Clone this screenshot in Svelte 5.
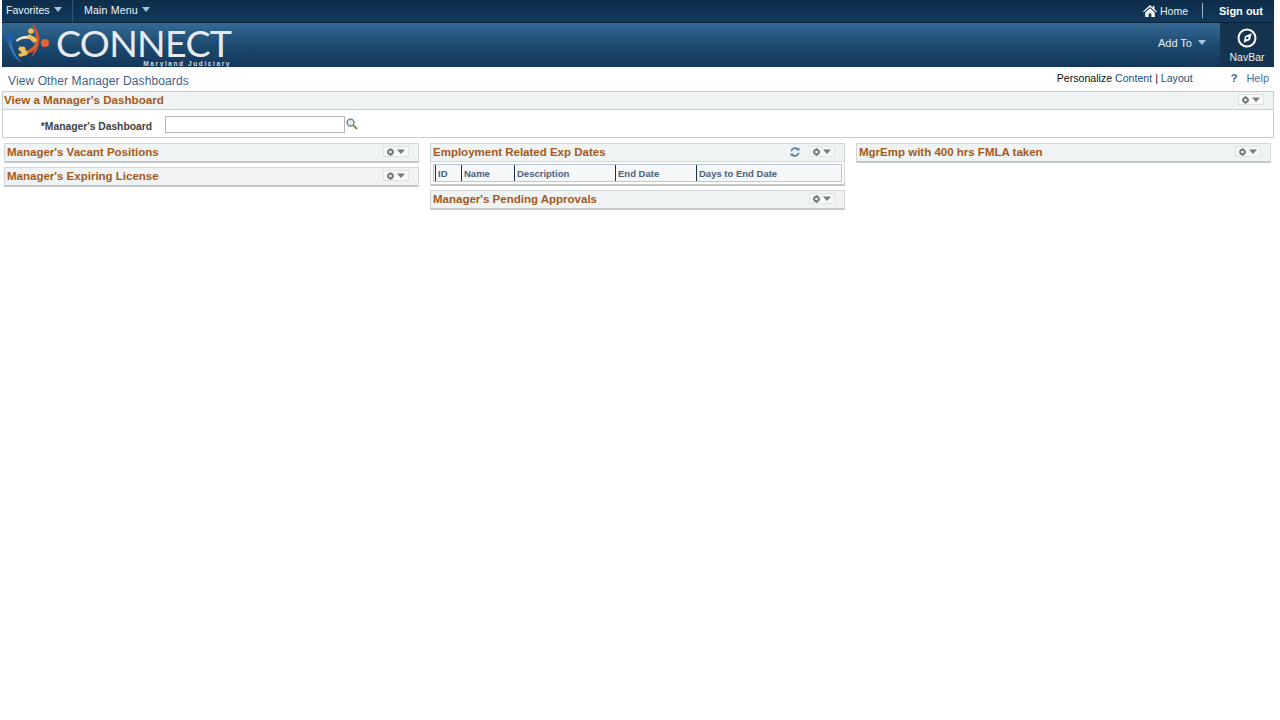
<script>
  const columns = [
    [
      { title: "Manager's Vacant Positions" },
      { title: "Manager's Expiring License" }
    ],
    [
      { title: 'Employment Related Exp Dates', refresh: true, headers: [
        { label: 'ID', w: 26 },
        { label: 'Name', w: 53 },
        { label: 'Description', w: 101 },
        { label: 'End Date', w: 81 },
        { label: 'Days to End Date', w: 144 }
      ] },
      { title: "Manager's Pending Approvals" }
    ],
    [
      { title: 'MgrEmp with 400 hrs FMLA taken' }
    ]
  ];
</script>

{#snippet gear()}
  <button class="gear" aria-label="Options">
    <svg width="18" height="8" viewBox="0 0 18 8">
      <circle cx="3.5" cy="4" r="2.3" fill="none" stroke="#767b7f" stroke-width="1.9" />
      <path d="M3.5 0v1M3.5 7v1M0 4h1M6 4h1" stroke="#767b7f" stroke-width="1.3" />
      <path d="M10 1.5h8l-4 4.5z" fill="#767b7f" />
    </svg>
  </button>
{/snippet}

<div class="page">
  <header>
    <div class="topbar">
      <div class="menus">
        <span class="menu fav">Favorites <i class="caret"></i></span>
        <span class="menu main">Main Menu <i class="caret"></i></span>
      </div>
      <div class="links">
        <svg class="home" width="14" height="12" viewBox="0 0 14 12">
          <path d="M7 0 0 6.4l.7.8L7 1.9l6.3 5.3.7-.8-2.6-2.3V1H9.8v1.8zM2.2 7.4V12h3.4V8.6h2.8V12h3.4V7.4L7 3.2z" fill="#fff" />
        </svg>
        <span class="home-label">Home</span>
        <span class="sep"></span>
        <b>Sign out</b>
      </div>
    </div>
    <div class="brand">
      <div class="logo">
        <svg width="50" height="44" viewBox="0 0 50 44">
          <path d="M30 0c9 9 11 23-1 35 5-10 7-22 1-35z" fill="#d4502f" />
          <path d="M9 16c1 10 5 18 12 24-9-4-14-13-15-23z" fill="#2f78b8" />
          <circle cx="8" cy="15" r="4.6" fill="#1f5ca6" />
          <circle cx="43" cy="20" r="4" fill="#e4652f" />
          <circle cx="29" cy="8" r="2.8" fill="#f0bf5a" />
          <path d="M14 17c3-3 8-5 14-4l-1 3c-5-1-9 0-12 3z" fill="#e9e6d6" />
          <path d="M27 11l7 4 1 3-3 2-7-6z" fill="#f0bf5a" />
          <path d="M36 18c0 6-4 11-11 13l-1-3c5-2 9-5 10-10z" fill="#df5f2c" />
          <path d="M18 23l8 6-1 3-7 2-2-3 4-1-4-4z" fill="#f0bf5a" />
          <circle cx="21" cy="26" r="2.6" fill="#f0bf5a" />
        </svg>
        <div class="wordmark">
          <span class="connect">CONNECT</span>
          <span class="md">Maryland Judiciary</span>
        </div>
      </div>
      <div class="brand-right">
        <span class="addto">Add To <i class="caret"></i></span>
        <div class="navbar">
          <svg width="20" height="20" viewBox="0 0 20 20">
            <circle cx="10" cy="10" r="8.5" fill="none" stroke="#fff" stroke-width="2" />
            <path d="M14.8 5.2 13 12 6.6 14.8 8 8z" fill="#fff" />
            <circle cx="10.2" cy="10" r="1.3" fill="#1d3f5e" />
          </svg>
          <span>NavBar</span>
        </div>
      </div>
    </div>
  </header>

  <div class="toolbar">
    <a class="other" href="#other">View Other Manager Dashboards</a>
    <div class="personalize">
      <span>Personalize <em>Content</em> | <em>Layout</em></span>
      <span class="help"><b>?</b><em>Help</em></span>
    </div>
  </div>

  <section class="search">
    <div class="search-head">
      <h2>View a Manager's Dashboard</h2>
      {@render gear()}
    </div>
    <div class="search-body">
      <label for="mgr">*Manager's Dashboard</label>
      <input id="mgr" type="text" />
      <svg class="lens" width="12" height="12" viewBox="0 0 12 12">
        <circle cx="4.6" cy="4.6" r="3.5" fill="#dfeaf0" stroke="#5c7f86" stroke-width="1.3" />
        <path d="M7.4 7.4 11 11" stroke="#8a8a3a" stroke-width="2" />
      </svg>
    </div>
  </section>

  <div class="columns">
    {#each columns as col}
      <div class="col">
        {#each col as p}
          <section class="pagelet">
            <div class="pagelet-head">
              <h3>{p.title}</h3>
              {#if p.refresh}
                <svg class="refresh" width="10" height="10" viewBox="0 0 10 10">
                  <path d="M1.2 4.2A4 4 0 0 1 8 2.4M8.8 5.8A4 4 0 0 1 2 7.6" fill="none" stroke="#4f7a9c" stroke-width="1.6" />
                  <path d="M9.4.6v3H6.4zM.6 9.4v-3h3z" fill="#4f7a9c" />
                </svg>
              {/if}
              {@render gear()}
            </div>
            {#if p.headers}
              <div class="grid-wrap">
                <div class="grid">
                  {#each p.headers as h}
                    <span style="width: {h.w}px">{h.label}</span>
                  {/each}
                </div>
              </div>
            {/if}
          </section>
        {/each}
      </div>
    {/each}
  </div>
</div>

<style>
  :global(body) {
    background: #fff;
    font-family: "Liberation Sans", Arial, sans-serif;
  }

  .page {
    width: 1272px;
    margin-left: 2px;
    min-height: 720px;
  }

  .topbar {
    height: 22px;
    display: flex;
    justify-content: space-between;
    background: linear-gradient(#0d2c49, #12395c);
    border-bottom: 1px solid #0a2238;
    color: #fff;
    font-size: 10.6px;
  }

  .menus {
    display: flex;
  }

  .menu {
    display: flex;
    align-items: center;
    gap: 3px;
    height: 22px;
    padding-bottom: 3px;
    box-sizing: border-box;
    color: #eef3f7;
  }

  .fav {
    width: 71px;
    padding-left: 4px;
    border-right: 1px solid #2f5575;
  }

  .main {
    padding-left: 11px;
    letter-spacing: 0.15px;
  }

  .caret {
    display: inline-block;
    width: 0;
    height: 0;
    margin-left: 1px;
    border-left: 4px solid transparent;
    border-right: 4px solid transparent;
    border-top: 5px solid #a9c3d8;
  }

  .links {
    display: flex;
    align-items: center;
    padding: 0 11px 1px 0;
  }

  .home {
    margin-right: 3px;
  }

  .home-label {
    color: #eef3f7;
    font-size: 10.5px;
  }

  .sep {
    width: 1px;
    height: 15px;
    margin: 0 16px 0 14px;
    background: #9fb4c6;
  }

  .links b {
    font-size: 11px;
  }

  .brand {
    height: 44px;
    display: flex;
    justify-content: space-between;
    background: linear-gradient(#346a95, #1d4a70 50%, #12375a);
  }

  .logo {
    display: flex;
  }

  .wordmark {
    position: relative;
    margin-left: 4px;
    width: 180px;
  }

  .connect {
    display: block;
    margin-top: 3px;
    font-family: Lato, sans-serif;
    font-weight: 400;
    font-size: 37.5px;
    line-height: 33px;
    color: #e8ebed;
    letter-spacing: -0.7px;
  }

  .md {
    position: absolute;
    top: 37px;
    right: 5px;
    font-size: 6.5px;
    line-height: 7px;
    font-weight: bold;
    letter-spacing: 1.6px;
    color: #d5dce2;
  }

  .brand-right {
    display: flex;
    align-items: stretch;
  }

  .addto {
    display: flex;
    align-items: center;
    gap: 4px;
    padding: 0 14px 5px 0;
    font-size: 11px;
    color: #e6edf3;
  }

  .addto .caret {
    margin-left: 2px;
  }

  .navbar {
    width: 54px;
    background: #14344f;
    display: flex;
    flex-direction: column;
    align-items: center;
    padding-top: 5px;
    box-sizing: border-box;
    color: #e6edf3;
    font-size: 10.5px;
    gap: 3px;
  }

  .toolbar {
    height: 24px;
    display: flex;
    justify-content: space-between;
    align-items: flex-start;
  }

  .other {
    margin: 7px 0 0 6px;
    font-size: 12px;
    line-height: 14px;
    letter-spacing: 0.1px;
    color: #3f5f8a;
    text-decoration: none;
  }

  .personalize {
    display: flex;
    margin-top: 5px;
    padding-right: 5px;
    font-size: 10.6px;
    line-height: 12px;
    color: #111;
  }

  .personalize em {
    font-style: normal;
    color: #1d4f78;
  }

  .help {
    margin-left: 38px;
    font-size: 11px;
  }

  .help b {
    color: #3d5f9c;
    margin-right: 9px;
  }

  .help em {
    color: #3f6f98;
  }

  .search {
    border: 1px solid #c9cdcf;
    border-top-color: #c4c8ca;
    height: 47px;
    box-sizing: border-box;
  }

  .search-head {
    height: 18px;
    box-sizing: border-box;
    display: flex;
    justify-content: space-between;
    align-items: center;
    background: #eff3f4;
    border-bottom: 1px solid #c9cdcf;
    padding: 0 9px 0 1px;
  }

  h2, h3 {
    margin: 0;
    font-size: 11.5px;
    font-weight: bold;
    color: #a35a20;
    padding-bottom: 2px;
  }

  h2 {
    font-size: 11.6px;
  }

  .search-body {
    display: flex;
    align-items: center;
    height: 27px;
  }

  label {
    width: 149px;
    box-sizing: border-box;
    text-align: right;
    font-size: 10.3px;
    font-weight: bold;
    color: #3c3f42;
    margin-top: 5px;
  }

  input {
    width: 180px;
    height: 17px;
    box-sizing: border-box;
    margin: 1px 0 0 13px;
    border: 1px solid #b4b8ba;
    padding: 0;
  }

  .lens {
    margin-left: 1px;
  }

  .columns {
    display: grid;
    grid-template-columns: repeat(3, 415px);
    column-gap: 11px;
    padding: 5px 0 0 2px;
  }

  .col {
    display: flex;
    flex-direction: column;
    gap: 4px;
  }

  .pagelet {
    border: 1px solid #d3d7d9;
    border-bottom: 2px solid #c3c8cb;
    background: #fff;
  }

  .pagelet-head {
    height: 17px;
    display: flex;
    align-items: center;
    background: #eff3f4;
    padding: 0 9px 0 2px;
  }

  .pagelet-head h3 {
    flex: 1;
  }

  .refresh {
    margin: 0 9px 1px 0;
  }

  .gear {
    width: 26px;
    height: 11px;
    margin-bottom: 2px;
    padding: 0;
    display: flex;
    align-items: center;
    justify-content: center;
    background: #f7f8f8;
    border: 1px solid #dfe2e3;
    border-radius: 0;
  }

  .grid-wrap {
    padding: 2px;
    border-top: 1px solid #d3d7d9;
  }

  .grid {
    display: flex;
    height: 18px;
    border: 1px solid #b6c6d6;
    box-sizing: border-box;
    padding-left: 1px;
    background: #f6f7f8;
  }

  .grid span {
    box-sizing: border-box;
    border-left: 1px solid #1b2f45;
    padding-left: 2px;
    font-size: 9.5px;
    line-height: 17px;
    font-weight: bold;
    color: #49617f;
  }
</style>
